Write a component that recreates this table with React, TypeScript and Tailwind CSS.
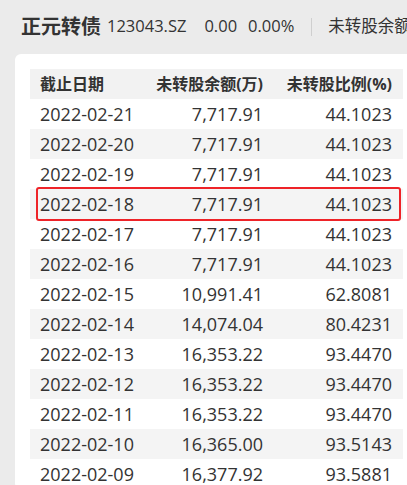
const rows = [
  ["2022-02-21", "7,717.91", "44.1023"],
  ["2022-02-20", "7,717.91", "44.1023"],
  ["2022-02-19", "7,717.91", "44.1023"],
  ["2022-02-18", "7,717.91", "44.1023"],
  ["2022-02-17", "7,717.91", "44.1023"],
  ["2022-02-16", "7,717.91", "44.1023"],
  ["2022-02-15", "10,991.41", "62.8081"],
  ["2022-02-14", "14,074.04", "80.4231"],
  ["2022-02-13", "16,353.22", "93.4470"],
  ["2022-02-12", "16,353.22", "93.4470"],
  ["2022-02-11", "16,353.22", "93.4470"],
  ["2022-02-10", "16,365.00", "93.5143"],
  ["2022-02-09", "16,377.92", "93.5881"],
];

const font = { fontFamily: '"Open Sans", "Noto Sans CJK SC", sans-serif' };

export default function App() {
  return (
    <div
      className="w-[407px] h-[485px] overflow-hidden bg-[#ebebeb] text-[#333]"
      style={font}
    >
      <div className="flex items-center h-[54px] pl-[21px] pb-[1px] whitespace-nowrap">
        <span className="shrink-0 text-[20px] font-bold text-[#333]">正元转债</span>
        <span className="shrink-0 text-[16.5px] ml-[6px]">123043.SZ</span>
        <span className="shrink-0 text-[16.5px] ml-[18px]">0.00</span>
        <span className="shrink-0 text-[16.5px] ml-[11px]">0.00%</span>
        <span className="shrink-0 w-px h-[18px] bg-[#cfcfcf] ml-[17px]" />
        <span className="shrink-0 text-[16.5px] ml-[16px]">未转股余额</span>
      </div>
      <div className="ml-[15px] w-[420px] bg-white rounded-[6px] pt-[15px] pl-[15px]">
        <div className="w-[373px]">
          <div className="grid grid-cols-[120px_123px_130px] h-[30px] items-center bg-[#f2f2f2] text-[16px] font-bold">
            <span className="pl-[10px]">截止日期</span>
            <span className="text-right pr-[10px]">未转股余额(万)</span>
            <span className="text-right pr-[11px]">未转股比例(%)</span>
          </div>
          {rows.map((r, i) => (
            <div
              key={r[0]}
              className={
                "relative grid grid-cols-[120px_123px_130px] h-[30px] items-center text-[18px] " +
                (i % 2 === 1 ? "bg-[#f4f4f4]" : "bg-white")
              }
            >
              <span className="pl-[10px]">{r[0]}</span>
              <span className="text-right pr-[10px]">{r[1]}</span>
              <span className="text-right pr-[11px]">{r[2]}</span>
              {i === 3 && (
                <div className="absolute z-10 left-[6px] right-[2px] -top-[2px] -bottom-[2px] border-[2.5px] border-[#ee2328] rounded-[3px]" />
              )}
            </div>
          ))}
        </div>
      </div>
    </div>
  );
}
